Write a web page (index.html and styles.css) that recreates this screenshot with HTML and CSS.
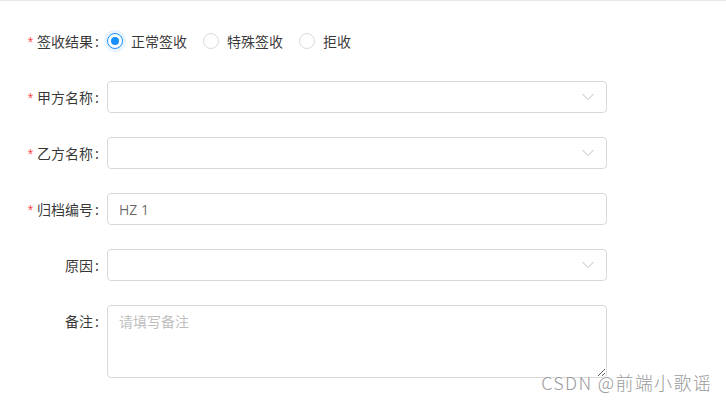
FILE: index.html
```html
<!DOCTYPE html>
<html lang="zh-CN">
<head>
<meta charset="utf-8">
<link rel="stylesheet" href="styles.css">
</head>
<body>
<div class="page">
  <form class="form">
    <div class="item">
      <label class="label required">签收结果</label>
      <div class="control radios">
        <span class="radio checked"><span class="dot"></span><span class="rtext">正常签收</span></span>
        <span class="radio"><span class="dot"></span><span class="rtext">特殊签收</span></span>
        <span class="radio"><span class="dot"></span><span class="rtext">拒收</span></span>
      </div>
    </div>
    <div class="item">
      <label class="label required">甲方名称</label>
      <div class="control"><div class="select"><svg class="arrow" viewBox="0 0 12 8" width="12" height="8"><polyline points="0.5,1 6,6.5 11.5,1" fill="none" stroke="#bfbfbf" stroke-width="1"/></svg></div></div>
    </div>
    <div class="item">
      <label class="label required">乙方名称</label>
      <div class="control"><div class="select"><svg class="arrow" viewBox="0 0 12 8" width="12" height="8"><polyline points="0.5,1 6,6.5 11.5,1" fill="none" stroke="#bfbfbf" stroke-width="1"/></svg></div></div>
    </div>
    <div class="item">
      <label class="label required">归档编号</label>
      <div class="control"><div class="input">HZ 1</div></div>
    </div>
    <div class="item">
      <label class="label">原因</label>
      <div class="control"><div class="select"><svg class="arrow" viewBox="0 0 12 8" width="12" height="8"><polyline points="0.5,1 6,6.5 11.5,1" fill="none" stroke="#bfbfbf" stroke-width="1"/></svg></div></div>
    </div>
    <div class="item">
      <label class="label">备注</label>
      <div class="control"><textarea class="textarea" placeholder="请填写备注"></textarea></div>
    </div>
  </form>
  <div class="watermark">CSDN @前端小歌谣</div>
</div>
</body>
</html>
```
FILE: styles.css
```css
* { box-sizing: border-box; }
html, body { margin: 0; padding: 0; background: #fff; }
body {
  font-family: "Noto Sans CJK SC", "Noto Sans", sans-serif;
  font-size: 14px;
  color: rgba(0,0,0,0.8);
  width: 726px;
  height: 401px;
  overflow: hidden;
}
.page {
  position: relative;
  height: 401px;
  border-top: 1px solid #e8e8e8;
  padding-top: 24px;
}
.form { display: flex; flex-direction: column; gap: 24px; }
.item { display: flex; align-items: flex-start; }
.label {
  width: 107px;
  flex: none;
  text-align: right;
  line-height: 32px;
  height: 32px;
  white-space: nowrap;
}
.label::after {
  content: ":";
  margin: 0 8px 0 2px;
}
.label.required::before {
  content: "*";
  color: #ff4d4f;
  margin-right: 4px;
  font-family: "Liberation Sans", sans-serif;
  font-size: 14px;
}
.control { width: 500px; flex: none; }
.radios { display: flex; align-items: center; height: 32px; }
.radio { display: inline-flex; align-items: center; margin-right: 8px; }
.dot {
  width: 16px; height: 16px; border-radius: 50%;
  border: 1px solid #d9d9d9; background: #fff;
  position: relative; flex: none;
}
.radio.checked .dot {
  border-color: #1890ff;
  box-shadow: 0 0 0 3px rgba(24,144,255,0.1);
}
.radio.checked .dot::after {
  content: ""; position: absolute; left: 3px; top: 3px;
  width: 8px; height: 8px; border-radius: 50%; background: #1890ff;
}
.rtext { padding: 0 8px; line-height: 22px; }
.select, .input {
  height: 32px;
  border: 1px solid #d9d9d9;
  border-radius: 4px;
  display: flex; align-items: center;
  padding: 0 11px;
}
.select { justify-content: flex-end; }
.arrow { display: block; margin-right: 1px; }
.input { color: rgba(0,0,0,0.6); font-family: "Open Sans", sans-serif; }
.textarea {
  display: block;
  width: 500px; height: 73px;
  border: 1px solid #d9d9d9;
  border-radius: 4px;
  padding: 4px 11px;
  font-family: inherit; font-size: 14px; line-height: 22px;
  color: rgba(0,0,0,0.85);
  resize: vertical;
  margin: 0;
}
.textarea::placeholder { color: #bfbfbf; }
.watermark {
  position: absolute;
  right: 14px; bottom: 6px;
  font-size: 18px;
  color: #9a9a9a;
  text-shadow: 0 0 2px #fff, 0 0 2px #fff;
  font-family: "Noto Sans CJK SC", sans-serif;
  font-weight: 300;
  letter-spacing: 1.3px;
}
```
